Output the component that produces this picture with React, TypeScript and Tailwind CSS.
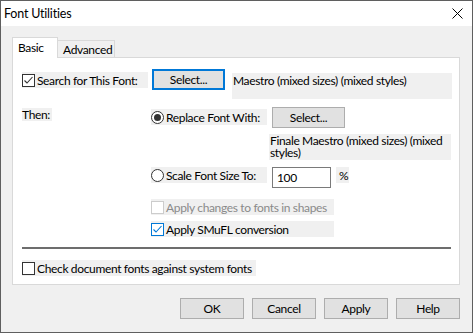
import React from "react";

const font = { fontFamily: 'Lato, "Noto Sans", sans-serif' };

function CheckBox({ checked, disabled, focus }: { checked?: boolean; disabled?: boolean; focus?: boolean }) {
  const border = disabled ? "border-[#cccccc]" : focus ? "border-[#0078d7]" : "border-[#333333]";
  return (
    <div className={`w-[13px] h-[13px] border ${border} bg-white flex items-center justify-center shrink-0`}>
      {checked && (
        <svg width="11" height="11" viewBox="0 0 11 11">
          <path d="M1.5 5.5 L4 8 L9.5 2" fill="none" stroke={focus ? "#0078d7" : "#333333"} strokeWidth="1.1" />
        </svg>
      )}
    </div>
  );
}

function Radio({ checked }: { checked?: boolean }) {
  return (
    <div className="w-[13px] h-[13px] rounded-full border border-[#333333] bg-white flex items-center justify-center shrink-0">
      {checked && <div className="w-[7px] h-[7px] rounded-full bg-[#333333]" />}
    </div>
  );
}

export default function App() {
  return (
    <div className="w-[473px] h-[333px] border border-[#5f5f5f] bg-[#f0f0f0] text-[12px] tracking-[-0.35px] text-black leading-[15px] overflow-hidden whitespace-nowrap" style={font}>
      {/* title bar */}
      <div className="h-[25px] bg-white flex items-center justify-between pl-[3px] pr-[9px]">
        <span className="text-[12.5px] tracking-[-0.2px]">Font Utilities</span>
        <svg width="11" height="11" viewBox="0 0 11 11">
          <path d="M0.5 0.5 L10.5 10.5 M10.5 0.5 L0.5 10.5" stroke="#000" strokeWidth="1" />
        </svg>
      </div>

      <div className="pl-[11px] pr-[12px] pt-[11px]">
        {/* tabs */}
        <div className="flex items-end h-[20px] relative z-10">
          <div className="w-[46px] h-[21px] -mb-[1px] bg-white border border-b-0 border-[#d9d9d9] pl-[5px] pt-[2px]">Basic</div>
          <div className="w-[57px] h-[17px] bg-[#f0f0f0] border border-b-0 border-l-0 border-[#d9d9d9] pl-[5px] pt-[1px]">Advanced</div>
        </div>

        {/* panel */}
        <div className="w-[448px] h-[228px] bg-white border border-[#d9d9d9] pl-[9px] pt-[11px]">
          {/* row 1 */}
          <div className="flex items-start">
            <div className="mt-[3px] w-[126px] h-[16px] bg-[#f0f0f0] flex items-center gap-[2px]">
              <CheckBox checked />
              <span>Search for This Font:</span>
            </div>
            <div className="ml-[4px] w-[73px] h-[21px] border-2 border-[#0078d7] bg-[#e1e1e1] flex items-center justify-center">Select...</div>
            <div className="ml-[7px] mt-[4px] w-[220px] h-[26px] bg-[#f0f0f0] pl-[1px]">Maestro (mixed sizes) (mixed styles)</div>
          </div>

          {/* row 2 */}
          <div className="flex items-start mt-[8px]">
            <div className="w-[129px]">
              <span className="bg-[#f0f0f0] inline-block w-[30px] h-[13px] leading-[13px] mt-[1px]">Then:</span>
            </div>
            <div className="mt-[2px] w-[116px] h-[16px] bg-[#f0f0f0] flex items-center gap-[2px]">
              <Radio checked />
              <span>Replace Font With:</span>
            </div>
            <div className="ml-[5px] w-[73px] h-[21px] border border-[#adadad] bg-[#e1e1e1] flex items-center justify-center">Select...</div>
          </div>

          {/* row 3 */}
          <div className="ml-[247px] mt-[6px] w-[182px] h-[26px] bg-[#f0f0f0] pl-[1px] pt-[1px] leading-[12px] whitespace-normal">
            Finale Maestro (mixed sizes) (mixed styles)
          </div>

          {/* row 4 */}
          <div className="flex items-start mt-[7px] ml-[129px]">
            <div className="w-[116px] h-[16px] bg-[#f0f0f0] flex items-center gap-[2px]">
              <Radio />
              <span>Scale Font Size To:</span>
            </div>
            <div className="ml-[5px] w-[59px] h-[21px] border border-[#7a7a7a] bg-white pl-[4px] flex items-center">100</div>
            <div className="ml-[5px] w-[13px] h-[16px] bg-[#f0f0f0] pl-[3px] flex items-center">%</div>
          </div>

          {/* row 5 */}
          <div className="mt-[11px] ml-[129px] w-[183px] h-[16px] bg-[#f0f0f0] flex items-center gap-[2px] text-[#8a8a8a]">
            <CheckBox disabled />
            <span>Apply changes to fonts in shapes</span>
          </div>

          {/* row 6 */}
          <div className="mt-[6px] ml-[129px] w-[183px] h-[16px] bg-[#f0f0f0] flex items-center gap-[2px]">
            <CheckBox checked focus />
            <span>Apply SMuFL conversion</span>
          </div>

          {/* separator */}
          <div className="mt-[10px] w-[429px] h-[2px] bg-[#6d6d6d]" />

          {/* row 7 */}
          <div className="mt-[11px] w-[234px] h-[16px] bg-[#f0f0f0] flex items-center gap-[2px]">
            <CheckBox />
            <span>Check document fonts against system fonts</span>
          </div>
        </div>

        {/* buttons */}
        <div className="flex justify-end gap-[8px] mt-[13px]">
          {["OK", "Cancel", "Apply", "Help"].map((t) => (
            <div key={t} className="w-[64px] h-[21px] border border-[#adadad] bg-[#e1e1e1] flex items-center justify-center">
              {t}
            </div>
          ))}
        </div>
      </div>
    </div>
  );
}
